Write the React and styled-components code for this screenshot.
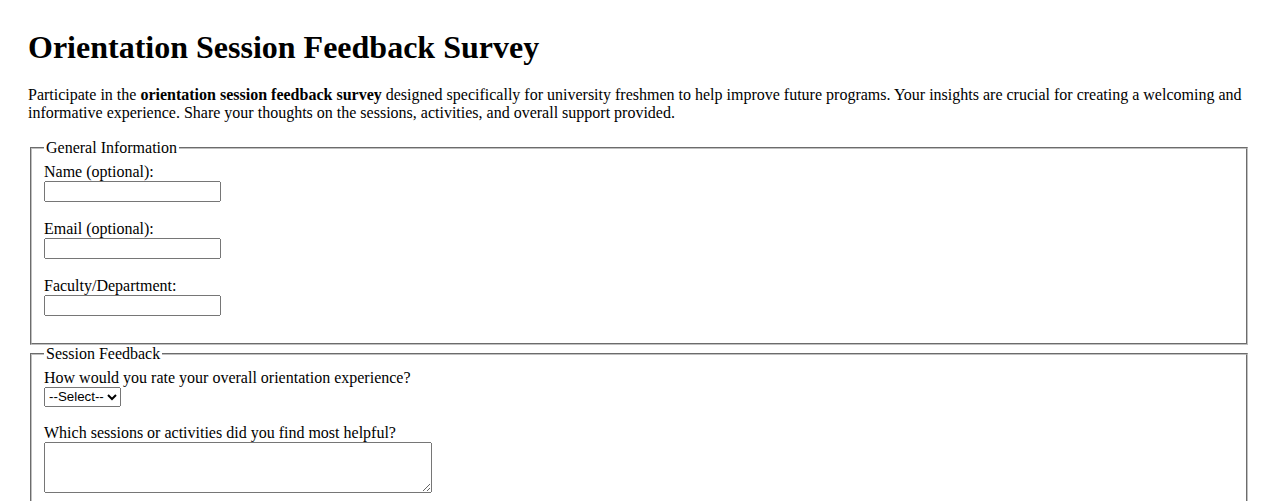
import React from "react";
import styled, { createGlobalStyle } from "styled-components";

const GlobalStyle = createGlobalStyle`
  body {
    margin: 8px;
    padding: 20px;
    background: #fff;
    color: #000;
    font-family: "Liberation Serif", "Times New Roman", serif;
    font-size: 16px;
  }
`;

const Title = styled.h1`
  margin: 1px 0 20px;
  font-size: 32px;
  line-height: 37px;
  font-weight: bold;
`;

const Intro = styled.p`
  margin: 0 0 16px;
  line-height: 18.4px;
`;

const Section = styled.fieldset`
  margin: 0 2px;
  padding: 5.6px 12px 10px;
  border: 2px groove rgb(192, 192, 192);
`;

const Legend = styled.legend`
  padding: 0 2px;
  line-height: 18.4px;
`;

const Field = styled.div`
  margin-bottom: ${(p) => p.$gap ?? 18}px;
  &:last-child {
    margin-bottom: 17px;
  }
`;

const Label = styled.label`
  display: block;
  line-height: 18px;
`;

const TextInput = styled.input`
  display: block;
  box-sizing: border-box;
  width: 177px;
  height: 21px;
  margin: 0;
  font: 13.33px "Liberation Sans", Arial, sans-serif;
`;

const Select = styled.select`
  display: block;
  box-sizing: border-box;
  height: 20px;
  margin: 0;
  font: 13.33px "Liberation Sans", Arial, sans-serif;
`;

const TextArea = styled.textarea`
  display: block;
  box-sizing: border-box;
  width: 388px;
  height: 51px;
  margin: 0;
  font: 13.33px "Liberation Mono", monospace;
`;

const generalFields = [
  { id: "name", label: "Name (optional):" },
  { id: "email", label: "Email (optional):" },
  { id: "faculty", label: "Faculty/Department:" },
];

function App() {
  return (
    <>
      <GlobalStyle />
      <Title>Orientation Session Feedback Survey</Title>
      <Intro>
        Participate in the <b>orientation session feedback survey</b> designed
        specifically for university freshmen to help improve future programs.
        Your insights are crucial for creating a welcoming and informative
        experience. Share your thoughts on the sessions, activities, and overall
        support provided.
      </Intro>
      <form>
        <Section>
          <Legend>General Information</Legend>
          {generalFields.map((f) => (
            <Field key={f.id}>
              <Label htmlFor={f.id}>{f.label}</Label>
              <TextInput id={f.id} type="text" />
            </Field>
          ))}
        </Section>
        <Section>
          <Legend>Session Feedback</Legend>
          <Field $gap={17}>
            <Label htmlFor="rating">
              How would you rate your overall orientation experience?
            </Label>
            <Select id="rating" defaultValue="">
              <option value="">--Select--</option>
              <option>Excellent</option>
              <option>Good</option>
              <option>Average</option>
              <option>Poor</option>
            </Select>
          </Field>
          <Field>
            <Label htmlFor="helpful">
              Which sessions or activities did you find most helpful?
            </Label>
            <TextArea id="helpful" />
          </Field>
        </Section>
      </form>
    </>
  );
}

export default App;
